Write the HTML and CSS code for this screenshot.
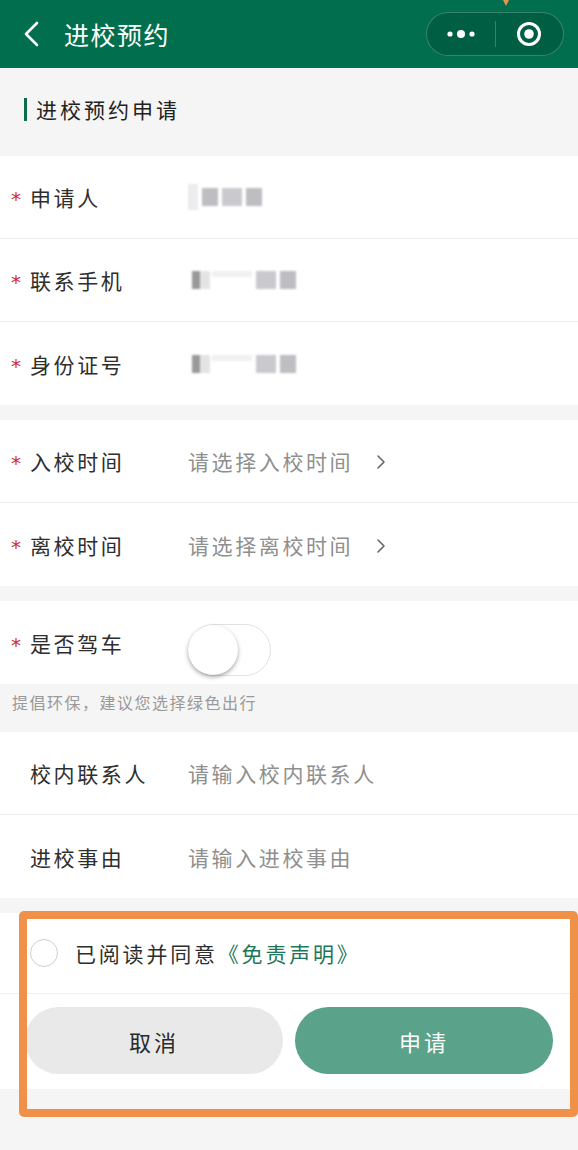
FILE: index.html
```html
<!DOCTYPE html>
<html lang="zh-CN">
<head>
<meta charset="utf-8">
<title>进校预约</title>
<link rel="stylesheet" href="styles.css">
</head>
<body>
<div class="page">
  <header class="navbar">
    <svg class="back" width="20" height="26" viewBox="0 0 20 26"><polyline points="15,2 4,13 15,24" fill="none" stroke="#fff" stroke-width="2.6" stroke-linecap="round" stroke-linejoin="round"/></svg>
    <div class="nav-title">进校预约</div>
    <div class="capsule">
      <div class="cap-btn">
        <svg width="36" height="12" viewBox="0 0 36 12"><circle cx="7" cy="6" r="2.6" fill="#fff"/><circle cx="18" cy="6" r="4" fill="#fff"/><circle cx="29" cy="6" r="2.6" fill="#fff"/></svg>
      </div>
      <div class="cap-div"></div>
      <div class="cap-btn">
        <svg width="28" height="28" viewBox="0 0 28 28"><circle cx="14" cy="14" r="10.5" fill="none" stroke="#fff" stroke-width="3"/><circle cx="14" cy="14" r="4.8" fill="#fff"/></svg>
      </div>
    </div>
  </header>

  <div class="sec-title"><span class="sec-bar"></span><span class="sec-text">进校预约申请</span></div>

  <section class="group">
    <div class="row"><span class="star">*</span><span class="label">申请人</span>
      <span class="mosaic m1"><i class="c a"></i><i class="c b"></i><i class="c d"></i><i class="c b"></i></span></div>
    <div class="row"><span class="star">*</span><span class="label">联系手机</span>
      <span class="mosaic m2"><i class="c b"></i><i class="c a"></i><i class="c e"></i><i class="c d"></i><i class="c b"></i></span></div>
    <div class="row"><span class="star">*</span><span class="label">身份证号</span>
      <span class="mosaic m3"><i class="c b"></i><i class="c a"></i><i class="c e"></i><i class="c d"></i><i class="c b"></i></span></div>
  </section>

  <section class="group">
    <div class="row"><span class="star">*</span><span class="label">入校时间</span><span class="ph">请选择入校时间</span>
      <svg class="chev" width="12" height="18" viewBox="0 0 12 18"><polyline points="3,3 9,9 3,15" fill="none" stroke="#666" stroke-width="1.6" stroke-linecap="round" stroke-linejoin="round"/></svg></div>
    <div class="row"><span class="star">*</span><span class="label">离校时间</span><span class="ph">请选择离校时间</span>
      <svg class="chev" width="12" height="18" viewBox="0 0 12 18"><polyline points="3,3 9,9 3,15" fill="none" stroke="#666" stroke-width="1.6" stroke-linecap="round" stroke-linejoin="round"/></svg></div>
  </section>

  <section class="group">
    <div class="row"><span class="star">*</span><span class="label">是否驾车</span>
      <span class="toggle"><span class="knob"></span></span></div>
  </section>
  <div class="tip">提倡环保，建议您选择绿色出行</div>

  <section class="group">
    <div class="row"><span class="star blank"></span><span class="label">校内联系人</span><span class="ph">请输入校内联系人</span></div>
    <div class="row"><span class="star blank"></span><span class="label">进校事由</span><span class="ph">请输入进校事由</span></div>
  </section>

  <section class="group card">
    <div class="agree"><span class="radio"></span><span class="agree-text">已阅读并同意<span class="link">《免责声明》</span></span></div>
    <div class="btns"><button class="btn cancel">取消</button><button class="btn apply">申请</button></div>
  </section>

  <div class="annot-box"></div>
  <div class="annot-tip"></div>
</div>
</body>
</html>
```

FILE: styles.css
```css
* { box-sizing: border-box; margin: 0; padding: 0; }
html, body { background: #f5f5f5; }
body {
  font-family: "Noto Sans CJK SC", "Noto Sans", sans-serif;
  color: #2e2e2e;
}
.page { position: relative; min-height: 1150px; width: 578px; background: #f5f5f5; }

.navbar {
  height: 68px;
  background: #016f4d;
  display: flex;
  align-items: center;
  padding-left: 22px;
}
.back { flex: none; }
.nav-title {
  margin-left: 22px;
  color: #fff;
  font-size: 25px;
  letter-spacing: 1.5px;
  line-height: 1;
}
.capsule {
  margin-left: auto;
  margin-right: 14px;
  width: 138px;
  height: 44px;
  border-radius: 22px;
  background: #005f42;
  border: 1px solid rgba(255,255,255,0.22);
  display: flex;
  align-items: center;
}
.cap-btn { flex: 1; display: flex; align-items: center; justify-content: center; }
.cap-div { width: 1px; height: 26px; background: rgba(255,255,255,0.22); }

.sec-title {
  height: 88px;
  display: flex;
  align-items: center;
  padding-left: 24px;
  padding-bottom: 6px;
}
.sec-bar { width: 3px; height: 23px; background: #0b6d49; margin-right: 9px; }
.sec-text { font-size: 21px; letter-spacing: 3px; color: #222; }

.group { background: #fff; margin-bottom: 15px; }
.row {
  height: 83px;
  display: flex;
  align-items: center;
  border-bottom: 1px solid #ededed;
}
.row:last-child { border-bottom: none; }
.star {
  width: 30px;
  padding-left: 11px;
  color: #d42a2f;
  font-size: 20px;
  font-family: "DejaVu Sans", sans-serif;
  line-height: 1;
  padding-top: 4px;
}
.label {
  width: 158px;
  font-size: 21px;
  letter-spacing: 2.6px;
  color: #2e2e2e;
}
.ph {
  font-size: 21px;
  letter-spacing: 2.6px;
  color: #8f8f8f;
}
.chev { margin-left: 22px; margin-top: 2px; }

.mosaic { display: flex; align-items: center; height: 30px; filter: blur(1.2px); }
.mosaic .c { display: block; height: 18px; }
.mosaic .a { width: 10px; background: #e4e4e6; }
.mosaic .b { width: 16px; background: #bdbdc2; margin-left: 4px; }
.mosaic .d { width: 20px; background: #c9c9ce; margin-left: 4px; }
.mosaic .e { width: 40px; background: #f0f0f2; height: 6px; margin-left: 2px; align-self: flex-start; margin-top: 6px; }
.m1 .c:first-child { height: 26px; background: #ececee; }
.m2 .c:first-child, .m3 .c:first-child { width: 8px; background: #999; }

.toggle {
  width: 83px;
  height: 52px;
  border-radius: 26px;
  border: 1.5px solid #e2e2e2;
  background: #fff;
  display: flex;
  align-items: center;
  margin-top: 15px;
}
.knob {
  width: 50px;
  height: 50px;
  border-radius: 50%;
  background: #fff;
  margin-left: -1px;
  box-shadow: 0 2px 4px rgba(0,0,0,0.35);
}

.tip {
  height: 48px;
  margin-top: -15px;
  padding-left: 12px;
  padding-top: 6px;
  font-size: 16px;
  letter-spacing: 1.5px;
  color: #999;
}

.card { margin-bottom: 0; }
.agree {
  height: 81px;
  display: flex;
  align-items: center;
  border-bottom: 1px solid #eeeeee;
  padding-left: 30px;
}
.radio {
  width: 28px;
  height: 28px;
  border-radius: 50%;
  border: 1.5px solid #cfcfcf;
  margin-right: 17px;
}
.agree-text { font-size: 21px; letter-spacing: 2.8px; color: #2e2e2e; }
.link { color: #1e7657; }
.btns {
  display: flex;
  gap: 12px;
  padding: 13px 25px 15px;
}
.btn {
  flex: 1;
  height: 67px;
  border: none;
  border-radius: 34px;
  font-family: "Noto Sans CJK SC", sans-serif;
  font-size: 22px;
  letter-spacing: 3px;
}
.cancel { background: #e9e9e9; color: #2a2a2a; }
.apply { background: #5aa28a; color: #fff; }

.annot-box {
  position: absolute;
  left: 19px;
  top: 911px;
  width: 559px;
  height: 206px;
  border: 8px solid #f0914a;
  border-radius: 5px;
}
.annot-tip {
  position: absolute;
  left: 501px;
  top: -4px;
  width: 0;
  height: 0;
  border-left: 5px solid transparent;
  border-right: 5px solid transparent;
  border-top: 10px solid #e8954f;
}
```
